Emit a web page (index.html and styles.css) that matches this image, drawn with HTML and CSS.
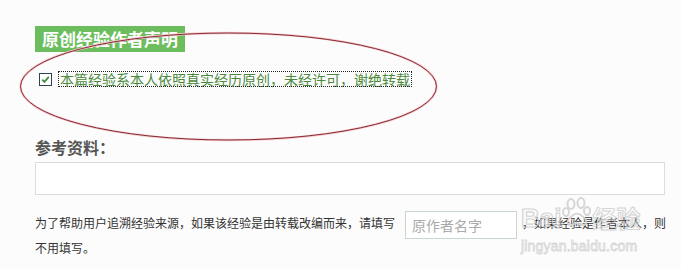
FILE: index.html
```html
<!DOCTYPE html>
<html lang="zh-CN">
<head>
<meta charset="utf-8">
<title>原创经验作者声明</title>
<link rel="stylesheet" href="styles.css">
</head>
<body>
<div class="page">
  <div class="title">原创经验作者声明</div>
  <div class="declare">
    <span class="check">
      <svg width="13" height="13" viewBox="0 0 13 13"><rect x="0.5" y="0.5" width="12" height="12" fill="#fff" stroke="#2b4257"/><path d="M3.2 6.6 L5.4 8.9 L9.8 3.9" fill="none" stroke="#3f8f3a" stroke-width="1.8"/></svg>
    </span>
    <span class="declare-text">本篇经验系本人依照真实经历原创，未经许可，谢绝转载</span>
  </div>
  <div class="ref-title">参考资料：</div>
  <div class="ref-input"></div>
  <div class="hint">为了帮助用户追溯经验来源，如果该经验是由转载改编而来，请填写<span class="author-input">原作者名字</span>，如果经验是作者本人，则<br>不用填写。</div>
</div>
<svg class="ellipse" width="681" height="269" viewBox="0 0 681 269"><ellipse cx="228.5" cy="86.5" rx="208" ry="53.5" fill="none" stroke="#f6c9cc" stroke-width="2.4"/><ellipse cx="228.5" cy="86.5" rx="208" ry="53.5" fill="none" stroke="#862a34" stroke-width="1"/></svg>
<div class="watermark">
  <div class="wm-logo"><span class="wm-bai">Bai</span><svg class="wm-paw" width="30" height="32" viewBox="0 0 30 32"><g fill="none" stroke="#d2d2d2" stroke-width="2"><ellipse cx="9" cy="7" rx="3.5" ry="5"/><ellipse cx="19" cy="6" rx="3.5" ry="5"/><ellipse cx="4" cy="15" rx="3" ry="4"/><ellipse cx="25" cy="14" rx="3" ry="4"/><path d="M8 28 C4 28 5 22 10 19 C13 16 17 16 20 19 C25 22 26 28 21 28 C18 28 16 26 14.5 26 C13 26 11 28 8 28 Z"/></g></svg><span class="wm-jy">经验</span></div>
  <div class="wm-url">jingyan.baidu.com</div>
</div>
</body>
</html>
```
FILE: styles.css
```css
html, body {
  margin: 0;
  padding: 0;
  background: #fcfcfc;
}
body {
  width: 681px;
  height: 269px;
  overflow: hidden;
  position: relative;
  font-family: "Noto Sans CJK SC", "Liberation Sans", sans-serif;
}
.page {
  padding: 26px 16px 0 35px;
}
.title {
  display: inline-block;
  background: #6cbd5e;
  color: #fff;
  font-size: 17px;
  font-weight: bold;
  height: 26px;
  line-height: 26px;
  padding: 0 7px;
}
.declare {
  display: flex;
  align-items: center;
  margin-top: 19px;
  padding-left: 4px;
  height: 16px;
}
.check {
  display: flex;
  width: 13px;
  height: 13px;
}
.declare-text {
  margin-left: 7px;
  font-size: 14px;
  line-height: 14px;
  color: #4b8a3c;
  outline: 1px dotted #222;
  padding: 0 1px;
}
.ref-title {
  margin-top: 50px;
  font-size: 16px;
  line-height: 20px;
  font-weight: bold;
  color: #555;
}
.ref-input {
  margin-top: 5px;
  width: 628px;
  height: 31px;
  background: #fff;
  border: 1px solid #dcdcdc;
}
.hint {
  margin-top: 16px;
  font-size: 12px;
  line-height: 23px;
  color: #333;
  width: 646px;
  white-space: nowrap;
}
.author-input {
  display: inline-block;
  vertical-align: middle;
  box-sizing: border-box;
  width: 112px;
  height: 28px;
  margin: -3px 5px -3px 10px;
  padding-left: 6px;
  border: 1px solid #c9d6c9;
  background: #fff;
  color: #aaa;
  font-size: 14px;
  line-height: 26px;
}
.ellipse {
  position: absolute;
  left: 0;
  top: 0;
  pointer-events: none;
}
.watermark {
  position: absolute;
  left: 521px;
  top: 196px;
  width: 124px;
  pointer-events: none;
  opacity: 0.9;
}
.wm-logo {
  display: flex;
  align-items: flex-end;
  height: 36px;
}
.wm-bai {
  font-family: "Liberation Sans", sans-serif;
  font-weight: bold;
  font-size: 26px;
  line-height: 28px;
  color: transparent;
  -webkit-text-stroke: 1.2px #d0d0d0;
}
.wm-paw {
  margin: 0 0 3px 1px;
}
.wm-jy {
  font-size: 24px;
  line-height: 28px;
  font-weight: bold;
  color: transparent;
  -webkit-text-stroke: 1px #d0d0d0;
}
.wm-url {
  font-family: "Liberation Sans", sans-serif;
  font-size: 14px;
  line-height: 16px;
  margin-top: 6px;
  color: transparent;
  -webkit-text-stroke: 0.8px #d2d2d2;
  letter-spacing: 0.2px;
}
```
